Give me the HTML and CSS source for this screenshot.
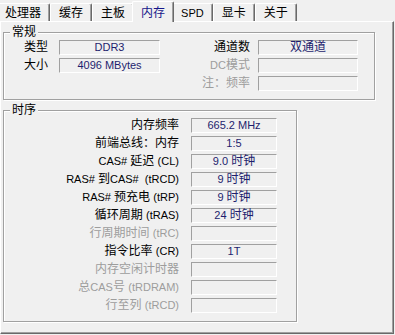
FILE: index.html
```html
<!DOCTYPE html>
<html>
<head>
<meta charset="utf-8">
<link rel="stylesheet" href="styles.css">
</head>
<body>
<div class="window">
  <div class="tabs">
    <div class="tab first">处理器</div>
    <div class="tab">缓存</div>
    <div class="tab">主板</div>
    <div class="tab active">内存</div>
    <div class="tab"><span class="en">SPD</span></div>
    <div class="tab">显卡</div>
    <div class="tab">关于</div>
  </div>
  <div class="panel">
    <div class="group general">
      <span class="legend">常规</span>
      <div class="grid general-grid">
        <span class="label">类型</span>
        <span class="field">DDR3</span>
        <span class="label">通道数</span>
        <span class="field zh">双通道</span>

        <span class="label">大小</span>
        <span class="field">4096 MBytes</span>
        <span class="label off"><span class="en">DC</span>模式</span>
        <span class="field"></span>

        <span class="blank"></span>
        <span class="blank"></span>
        <span class="label off">注：频率</span>
        <span class="field"></span>
      </div>
    </div>
    <div class="group timing">
      <span class="legend">时序</span>
      <div class="grid timing-grid">
        <span class="label">内存频率</span>
        <span class="field">665.2 MHz</span>

        <span class="label">前端总线：内存</span>
        <span class="field">1:5</span>

        <span class="label"><span class="en">CAS# </span>延迟 <span class="en">(CL)</span></span>
        <span class="field">9.0 <span class="zh">时钟</span></span>

        <span class="label"><span class="en">RAS# </span>到<span class="en">CAS# &nbsp;(tRCD)</span></span>
        <span class="field">9 <span class="zh">时钟</span></span>

        <span class="label"><span class="en">RAS# </span>预充电 <span class="en">(tRP)</span></span>
        <span class="field">9 <span class="zh">时钟</span></span>

        <span class="label">循环周期 <span class="en">(tRAS)</span></span>
        <span class="field">24 <span class="zh">时钟</span></span>

        <span class="label off">行周期时间 <span class="en">(tRC)</span></span>
        <span class="field"></span>

        <span class="label">指令比率 <span class="en">(CR)</span></span>
        <span class="field">1T</span>

        <span class="label off">内存空闲计时器</span>
        <span class="field"></span>

        <span class="label off">总<span class="en">CAS</span>号 <span class="en">(tRDRAM)</span></span>
        <span class="field"></span>

        <span class="label off">行至列 <span class="en">(tRCD)</span></span>
        <span class="field"></span>
      </div>
    </div>
  </div>
</div>
</body>
</html>
```

FILE: styles.css
```css
* {
  box-sizing: border-box;
}

html, body {
  margin: 0;
  padding: 0;
}

body {
  width: 395px;
  height: 335px;
  overflow: hidden;
  background: #f0f0f0;
  font-family: "Liberation Sans", "Noto Sans CJK SC", sans-serif;
  font-size: 12px;
  color: #000;
}

.window {
  height: 334px;
  display: flex;
  flex-direction: column;
}

.en {
  font-size: 11px;
}

.zh {
  font-size: 12px;
}

.tabs {
  display: flex;
  align-items: flex-start;
  height: 22px;
  padding-top: 1px;
  margin-bottom: -1px;
  position: relative;
  z-index: 1;
}

.tab {
  margin-top: 2px;
  height: 18px;
  padding: 2px 8px 0;
  line-height: 14px;
  border-top: 1px solid #fff;
  border-left: 1px solid #fff;
  border-right: 1px solid #696969;
  box-shadow: inset -1px 0 0 #a0a0a0;
  border-radius: 2px 2px 0 0;
  white-space: nowrap;
  background: #f0f0f0;
}

.tab.first {
  margin-left: -4px;
}

.tab.active {
  margin: 0 -2px;
  height: 21px;
  padding-top: 4px;
  color: #16168a;
  position: relative;
  z-index: 2;
}

.panel {
  flex: 1;
  margin-right: 1px;
  border-top: 1px solid #fff;
  border-left: 1px solid #fff;
  border-right: 1px solid #696969;
  border-bottom: 1px solid #696969;
  box-shadow: inset -1px -1px 0 #a0a0a0;
  padding: 10px 0 0 2px;
}

.group {
  border: 1px solid #a0a0a0;
  box-shadow: inset 1px 1px 0 #fff, 1px 1px 0 #fff;
}

.general {
  width: 372px;
  height: 68px;
}

.timing {
  width: 294px;
  height: 212px;
  margin-top: 10px;
}

.legend {
  display: block;
  width: max-content;
  margin: -8px 0 0 6px;
  padding: 0 2px;
  line-height: 14px;
  background: #f0f0f0;
  position: relative;
}

.grid {
  display: grid;
  grid-auto-rows: 15px;
  row-gap: 3px;
  margin-top: 1px;
}

.general-grid {
  grid-template-columns: 55px 101px 98px 100px;
}

.general-grid .label:nth-child(1),
.general-grid .label:nth-child(5) {
  padding-right: 11px;
}

.general-grid .label:nth-child(3),
.general-grid .label:nth-child(7),
.general-grid .label:nth-child(11) {
  padding-right: 8px;
}

.timing-grid {
  grid-template-columns: 187px 86px;
}

.timing-grid .label {
  padding-right: 12px;
}

.label {
  text-align: right;
  line-height: 15px;
  white-space: nowrap;
}

.label.off {
  color: #9d9d9d;
}

.field {
  height: 15px;
  border-top: 1px solid #a0a0a0;
  border-left: 1px solid #a0a0a0;
  border-bottom: 1px solid #fff;
  border-right: 1px solid #fff;
  text-align: center;
  font-size: 11px;
  line-height: 13px;
  color: #1e1e6e;
  white-space: nowrap;
}

.field.zh {
  font-size: 12px;
}
```
